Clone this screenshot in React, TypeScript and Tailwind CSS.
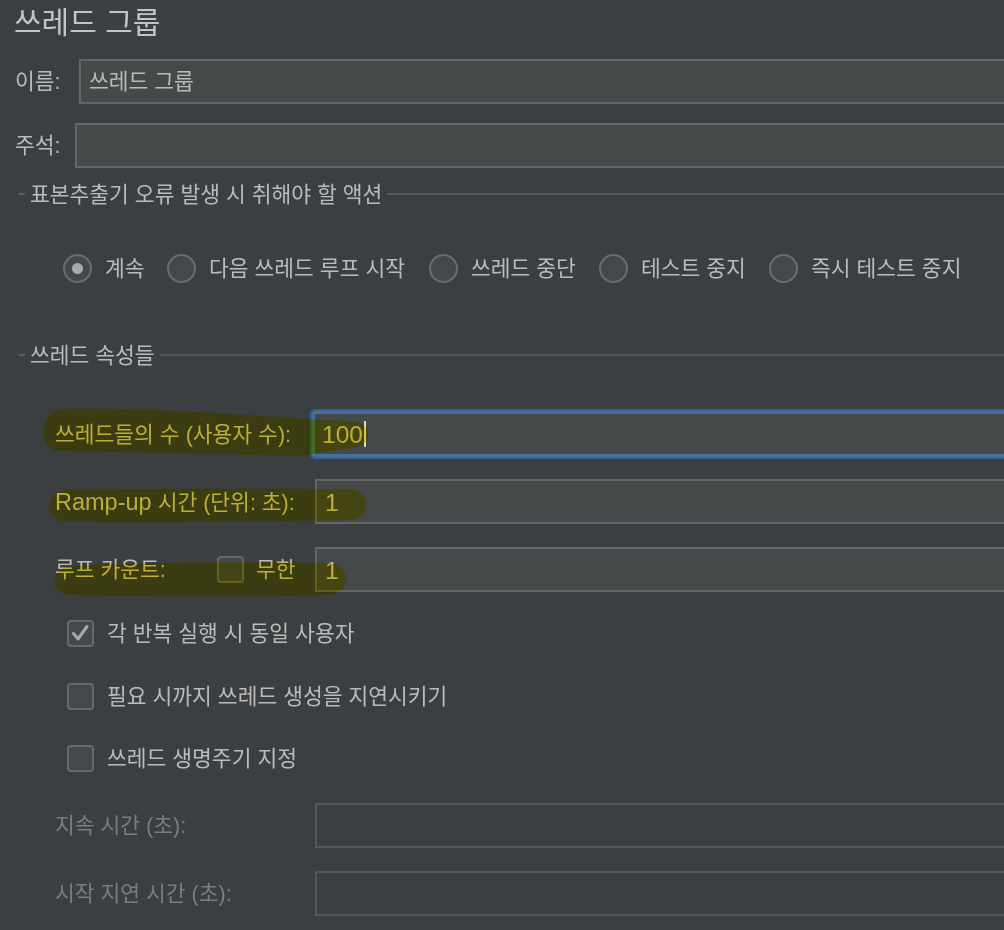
import React from "react";

function Field({
  focused = false,
  disabled = false,
  value = "",
  big = false,
  className = "",
}: {
  focused?: boolean;
  disabled?: boolean;
  value?: string;
  big?: boolean;
  className?: string;
}) {
  if (focused) {
    return (
      <div
        className={`flex-1 -mr-[10px] h-[46px] rounded-[3px] bg-[#45494a] border-[3px] border-[#46709f] ring-2 ring-[#3b628e] flex items-center pl-[7px] ${className}`}
      >
        <span className="pt-[3px] text-[24.5px] leading-none text-[#bbbbbb]">{value}</span>
        <span className="ml-[1px] w-[2px] h-[26px] bg-[#d8d8d8]" />
      </div>
    );
  }
  return (
    <div
      className={`flex-1 -mr-[10px] h-[45px] border-2 flex items-center pl-[8px] ${
        disabled ? "bg-[#3c3f41] border-[#545658]" : "bg-[#45494a] border-[#646667]"
      } ${className}`}
    >
      <span
        className={`pt-[3px] leading-none text-[#bbbbbb] whitespace-nowrap ${
          big ? "text-[24.5px]" : "text-[21.5px]"
        }`}
      >
        {value}
      </span>
    </div>
  );
}

function Section({ title, className = "" }: { title: string; className?: string }) {
  return (
    <div className={`flex items-center h-[24px] ${className}`}>
      <div className="ml-[19px] w-[6px] h-[2px] bg-[#5a5c5e]" />
      <span className="ml-[5px] pt-[3px] text-[21.5px] leading-none text-[#bbbbbb] whitespace-nowrap">{title}</span>
      <div className="ml-[5px] flex-1 h-[2px] bg-[#55585a]" />
    </div>
  );
}

function Radio({ label, selected = false, className = "" }: { label: string; selected?: boolean; className?: string }) {
  return (
    <div className={`flex items-center ${className}`}>
      <span className="w-[29px] h-[29px] shrink-0 rounded-full border-2 border-[#6a6c6e] bg-[#43494a] flex items-center justify-center">
        {selected && <span className="w-[11px] h-[11px] rounded-full bg-[#a9a9a9]" />}
      </span>
      <span className="ml-[13px] pt-[3px] text-[21.5px] leading-none whitespace-nowrap">{label}</span>
    </div>
  );
}

function Check({ checked = false }: { checked?: boolean }) {
  return (
    <span className="w-[27px] h-[27px] shrink-0 rounded-[4px] border-2 border-[#66686a] bg-[#43494a] flex items-center justify-center">
      {checked && (
        <svg width="23" height="23" viewBox="0 0 23 23">
          <path d="M4.5 11.5 L9 17 L18 4.5" fill="none" stroke="#a8a8a8" strokeWidth="3" strokeLinecap="round" strokeLinejoin="round" />
        </svg>
      )}
    </span>
  );
}

function CheckRow({ label, checked = false, className = "" }: { label: string; checked?: boolean; className?: string }) {
  return (
    <div className={`flex items-center h-[27px] pl-[67px] ${className}`}>
      <Check checked={checked} />
      <span className="ml-[13px] pt-[3px] text-[21.5px] leading-none whitespace-nowrap">{label}</span>
    </div>
  );
}

export default function App() {
  return (
    <div className="relative w-[1004px] h-[930px] overflow-hidden bg-[#3c3f41] text-[#bbbbbb] font-['Liberation_Sans','Noto_Sans_CJK_KR',sans-serif]">
      {/* title */}
      <div className="h-[42px] pl-[14px] flex items-center">
        <span className="pt-[3px] text-[30px] leading-none text-[#c4c4c4]">쓰레드 그룹</span>
      </div>

      {/* name */}
      <div className="mt-[17px] flex items-center pl-[15px]">
        <span className="w-[64px] pt-[3px] text-[21.5px] leading-none whitespace-nowrap">이름:</span>
        <Field value="쓰레드 그룹" />
      </div>

      {/* comment */}
      <div className="mt-[19px] flex items-center pl-[15px]">
        <span className="w-[60px] pt-[3px] text-[21.5px] leading-none whitespace-nowrap">주석:</span>
        <Field />
      </div>

      <Section title="표본추출기 오류 발생 시 취해야 할 액션" className="mt-[14px]" />

      <div className="mt-[47px] h-[30px] flex items-center pl-[63px]">
        <Radio label="계속" selected className="w-[104px]" />
        <Radio label="다음 쓰레드 루프 시작" className="w-[262px]" />
        <Radio label="쓰레드 중단" className="w-[170px]" />
        <Radio label="테스트 중지" className="w-[170px]" />
        <Radio label="즉시 테스트 중지" />
      </div>

      <Section title="쓰레드 속성들" className="mt-[60px]" />

      {/* threads */}
      <div className="mt-[44px] flex items-center pl-[55px]">
        <span className="w-[257px] pt-[3px] text-[21.5px] leading-none whitespace-nowrap">쓰레드들의 수 (사용자 수):</span>
        <Field focused value="100" />
      </div>

      <div className="mt-[22px] flex items-center pl-[55px]">
        <span className="w-[260px] pt-[3px] text-[21.5px] leading-none whitespace-nowrap">
          <span className="text-[23.5px]">Ramp-up</span> 시간 (단위: 초):
        </span>
        <Field value="1" big />
      </div>

      <div className="mt-[23px] flex items-center pl-[55px]">
        <div className="w-[260px] flex items-center">
          <span className="w-[162px] pt-[3px] text-[21.5px] leading-none whitespace-nowrap">루프 카운트:</span>
          <Check />
          <span className="ml-[12px] pt-[3px] text-[21.5px] leading-none">무한</span>
        </div>
        <Field value="1" big />
      </div>

      <CheckRow label="각 반복 실행 시 동일 사용자" checked className="mt-[28px]" />
      <CheckRow label="필요 시까지 쓰레드 생성을 지연시키기" className="mt-[36px]" />
      <CheckRow label="쓰레드 생명주기 지정" className="mt-[35px]" />

      <div className="mt-[31px] flex items-center pl-[55px]">
        <span className="w-[260px] pt-[3px] text-[21.5px] leading-none text-[#7b7d7f] whitespace-nowrap">지속 시간 (초):</span>
        <Field disabled />
      </div>
      <div className="mt-[23px] flex items-center pl-[55px]">
        <span className="w-[260px] pt-[3px] text-[21.5px] leading-none text-[#7b7d7f] whitespace-nowrap">시작 지연 시간 (초):</span>
        <Field disabled />
      </div>

      {/* highlighter strokes */}
      <svg
        className="absolute left-0 top-0 pointer-events-none mix-blend-multiply"
        width="1004"
        height="930"
        viewBox="0 0 1004 930"
      >
        <g fill="#fff045">
          <path d="M62 409 C110 407 230 413 305 419 L352 421 C374 423 374 446 352 448 L300 456 C210 454 90 452 58 451 C38 449 38 411 62 409 Z" />
          <path d="M66 490 C150 488 300 489 350 489 C372 490 372 519 350 520 C300 521 150 523 66 522 C44 521 44 491 66 490 Z" />
          <path d="M72 566 C150 561 280 562 328 563 C352 564 352 594 328 595 C280 597 150 597 70 595 C48 594 50 567 72 566 Z" />
        </g>
      </svg>
    </div>
  );
}
